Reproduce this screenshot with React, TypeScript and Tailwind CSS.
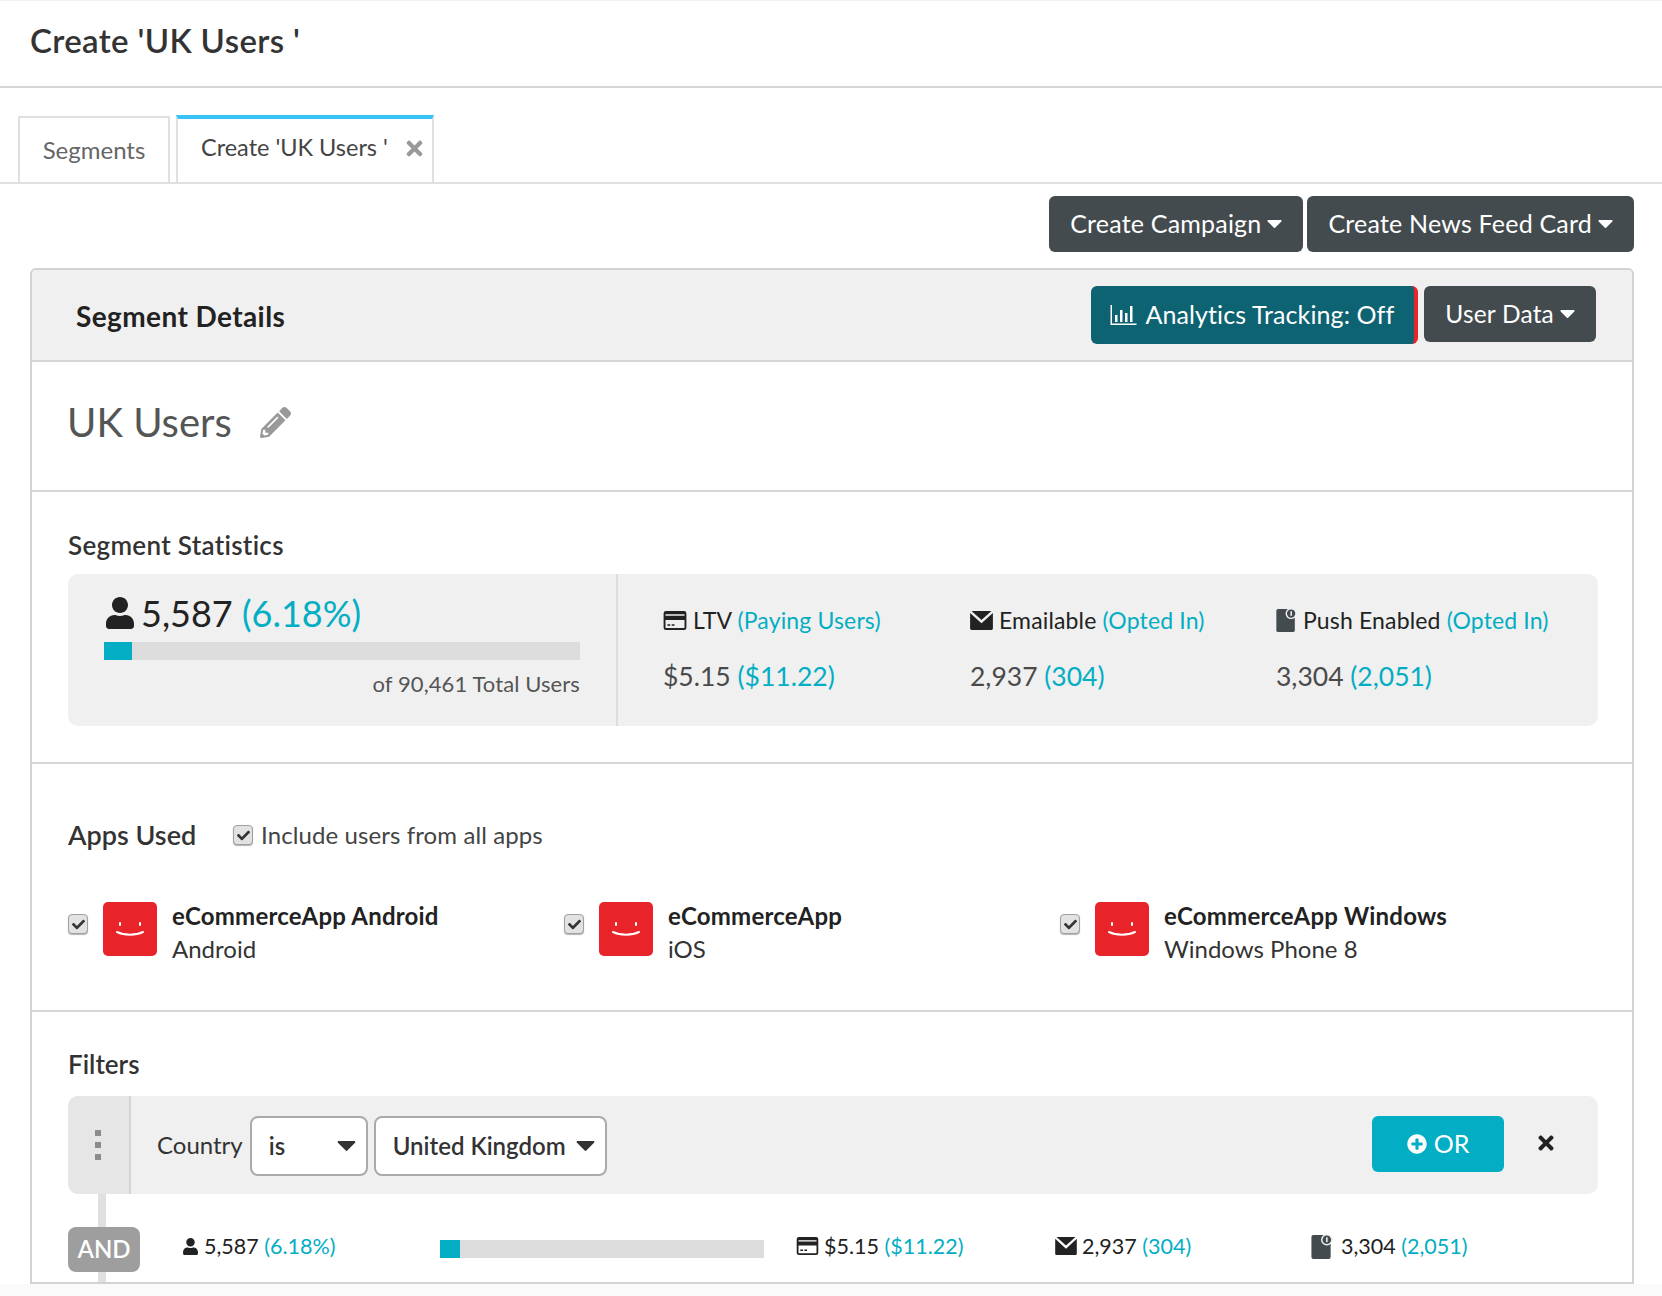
import { FaCheck, FaPencilAlt, FaPlusCircle, FaTimes, FaUser } from "react-icons/fa";

const APPS = [
  { name: "eCommerceApp Android", platform: "Android" },
  { name: "eCommerceApp", platform: "iOS" },
  { name: "eCommerceApp Windows", platform: "Windows Phone 8" },
];

function Caret({ className }: { className?: string }) {
  return (
    <svg viewBox="0 0 16 9" className={className} fill="currentColor">
      <path d="M1 0h14c.9 0 1.300 1 .7 1.600L8.700 8.600a1 1 0 0 1-1.400 0L.3 1.600C-.3 1 .1 0 1 0z" />
    </svg>
  );
}

function CardIcon({ className }: { className?: string }) {
  return (
    <svg viewBox="0 0 24 20" className={className} fill="currentColor">
      <path d="M2.500 0h19A2.500 2.500 0 0 1 24 2.500v15a2.500 2.500 0 0 1-2.500 2.500h-19A2.500 2.500 0 0 1 0 17.500v-15A2.500 2.500 0 0 1 2.500 0zM2 3.500V5h20V3.500zM2 9.500v8c0 .3.200.5.500.5h19c.3 0 .5-.2.500-.5v-8zm2 4.500h3v1.500H4zm4.500 0h3v1.500h-3z" fillRule="evenodd" />
    </svg>
  );
}

function MailIcon({ className }: { className?: string }) {
  return (
    <svg viewBox="0 0 24 20" className={className} fill="currentColor">
      <path d="M1.500 0h21L12 9.500zM0 2v16.500C0 19.300.7 20 1.500 20h21c.8 0 1.500-.7 1.500-1.500V2L12 13z" />
    </svg>
  );
}

function PushIcon({ className }: { className?: string }) {
  return (
    <svg viewBox="0 0 22 26" className={className}>
      <path d="M2 1h16a2 2 0 0 1 2 2v21a2 2 0 0 1-2 2H2a2 2 0 0 1-2-2V3a2 2 0 0 1 2-2z" fill="#444b4e" />
      <circle cx="16" cy="6" r="6" fill="#f0f0f0" />
      <circle cx="16" cy="6" r="4.500" fill="#444b4e" />
      <rect x="15.300" y="3.500" width="1.500" height="5" fill="#fff" />
    </svg>
  );
}

function ChartIcon({ className }: { className?: string }) {
  return (
    <svg viewBox="0 0 26 20" className={className} fill="currentColor">
      <path d="M0 0h1.500v18.500H26V20H0zM4.500 10h2.500v7H4.500zm5-5h2.500v12H9.500zm5 3h2.500v9H14.500zm5-7h2.500v16H19.500z" />
    </svg>
  );
}

function Smile({ className }: { className?: string }) {
  return (
    <div className={`flex items-center justify-center rounded-[5px] bg-[#e8242a] ${className}`}>
      <svg viewBox="0 0 30 16" className="h-[16px] w-[30px]" fill="none" stroke="#fff" strokeWidth="2" strokeLinecap="round">
        <path d="M5 2v2M25 2v2" />
        <path d="M2 11c7 3.500 19 3.500 26 0" />
      </svg>
    </div>
  );
}

function Check({ className }: { className?: string }) {
  return (
    <span className={`flex h-[20px] w-[20px] shrink-0 items-center justify-center rounded-[4px] border border-[#a0a0a0] bg-[#e2e2e2] shadow-[0_1px_1px_rgba(0,0,0,0.3)] ${className ?? ""}`}>
      <FaCheck className="text-[13px] text-[#333]" />
    </span>
  );
}

function DarkButton({ label, size }: { label: string; size: string }) {
  return (
    <button className={`flex h-[56px] items-center gap-[6px] rounded-[6px] bg-[#444b4e] px-[21px] tracking-[0.2px] text-white ${size}`}>
      {label}
      <Caret className="h-[8px] w-[15px]" />
    </button>
  );
}

function Stat({ icon, label, note, value, paren }: { icon: React.ReactNode; label: string; note: string; value: string; paren: string }) {
  return (
    <div>
      <div className="flex items-center gap-[6px] text-[23px] tracking-[0.15px] text-[#222]">
        {icon}
        <span>
          {label} <span className="text-[#03aec4]">{note}</span>
        </span>
      </div>
      <div className="mt-[19px] text-[26.500px] text-[#4a4a4a]">
        {value} <span className="text-[#03aec4]">{paren}</span>
      </div>
    </div>
  );
}

function MiniStat({ icon, value, paren, className }: { icon: React.ReactNode; value: string; paren: string; className?: string }) {
  return (
    <div className={`mt-[2px] flex items-center gap-[5px] text-[21.500px] text-[#222] ${className}`}>
      {icon}
      <span>
        {value} <span className="text-[#03aec4]">{paren}</span>
      </span>
    </div>
  );
}

export default function App() {
  return (
    <div className="h-[1296px] w-[1662px] overflow-hidden bg-white font-['Lato','Open_Sans',sans-serif] text-[#333]">
      <header className="flex h-[88px] items-center border-t border-b-2 border-t-[#f2f2f2] border-b-[#d6d6d6] pb-[6px] pl-[30px]">
        <h1 className="text-[33px] font-semibold tracking-[0.35px] text-[#333]">Create 'UK Users '</h1>
      </header>

      <div className="flex h-[96px] items-end gap-[6px] border-b-2 border-[#e0e0e0] pl-[18px]">
        <div className="flex h-[66px] w-[152px] items-center justify-center border-2 border-b-0 border-[#e0e0e0] text-[24px] text-[#666]">
          Segments
        </div>
        <div className="flex h-[67px] w-[258px] items-center gap-[15px] border-x-2 border-t-4 border-x-[#e0e0e0] border-t-[#38c3f5] pb-[5px] pl-[23px] text-[23.500px] text-[#444]">
          Create 'UK Users '
          <FaTimes className="text-[23px] text-[#999]" />
        </div>
      </div>

      <div className="flex justify-end gap-[4px] pr-[28px] pt-[12px]">
        <DarkButton label="Create Campaign" size="text-[25px]" />
        <DarkButton label="Create News Feed Card" size="text-[25px]" />
      </div>

      <div className="ml-[30px] mt-[16px] h-[1016px] w-[1604px] overflow-hidden rounded-t-[6px] border-2 border-[#d2d2d2]">
        <div className="flex h-[92px] items-center justify-between border-b-2 border-[#d6d6d6] bg-[#f0f0f0] pl-[44px] pr-[36px]">
          <h2 className="pt-[2px] text-[28px] font-bold tracking-[0.4px] text-[#222]">Segment Details</h2>
          <div className="flex items-start gap-[6px]">
            <button className="flex h-[58px] items-center gap-[9px] rounded-[6px] border-r-[4px] border-[#e8242a] bg-[#0e6373] pl-[19px] pr-[20px] text-[25px] tracking-[0.1px] text-white">
              <ChartIcon className="h-[20px] w-[27px]" />
              Analytics Tracking: Off
            </button>
            <DarkButton label="User Data" size="text-[24.500px]" />
          </div>
        </div>

        <div className="flex h-[130px] items-center gap-[28px] border-b-2 border-[#d6d6d6] pb-[8px] pl-[35px]">
          <span className="text-[40px] text-[#555]">UK Users</span>
          <FaPencilAlt className="text-[31px] text-[#999]" />
        </div>

        <div className="h-[272px] border-b-2 border-[#d6d6d6] pl-[36px] pr-[34px] pt-[38px]">
          <h3 className="text-[26px] font-semibold leading-[30px] tracking-[0.3px] text-[#333]">Segment Statistics</h3>
          <div className="mt-[14px] flex h-[152px] rounded-[10px] bg-[#f0f0f0]">
            <div className="w-[550px] border-r-2 border-[#dcdcdc] pl-[36px] pr-[36px] pt-[16px]">
              <div className="flex items-center gap-[5px] text-[36px] leading-[46px] text-[#222]">
                <FaUser className="text-[32px]" />
                <span>
                  5,587 <span className="text-[#03aec4]">(6.18%)</span>
                </span>
              </div>
              <div className="mt-[6px] h-[18px] w-[476px] bg-[#dcdcdc]">
                <div className="h-full w-[28px] bg-[#03aec4]" />
              </div>
              <p className="mt-[7px] text-right text-[22px] tracking-[0.1px] text-[#555]">of 90,461 Total Users</p>
            </div>
            <div className="grid flex-1 grid-cols-[307px_306px_1fr] pl-[45px] pt-[29px]">
              <Stat icon={<CardIcon className="h-[19px] w-[24px]" />} label="LTV" note="(Paying Users)" value="$5.15" paren="($11.22)" />
              <Stat icon={<MailIcon className="h-[19px] w-[23px]" />} label="Emailable" note="(Opted In)" value="2,937" paren="(304)" />
              <Stat icon={<PushIcon className="h-[24px] w-[21px]" />} label="Push Enabled" note="(Opted In)" value="3,304" paren="(2,051)" />
            </div>
          </div>
        </div>

        <div className="h-[248px] border-b-2 border-[#d6d6d6] pl-[36px] pr-[34px] pt-[53px]">
          <div className="flex items-center">
            <h3 className="w-[165px] text-[27px] font-semibold leading-[32px] text-[#333]">Apps Used</h3>
            <Check />
            <span className="ml-[8px] text-[24px] tracking-[0.1px] text-[#444]">Include users from all apps</span>
          </div>
          <div className="mt-[42px] grid grid-cols-[496px_496px_1fr]">
            {APPS.map((app) => (
              <div key={app.platform} className="flex items-center">
                <Check className="mb-[12px]" />
                <Smile className="mb-[2px] ml-[15px] h-[54px] w-[54px]" />
                <div className="ml-[15px] mt-[4px]">
                  <div className="text-[24px] font-bold leading-[33px] tracking-[0.2px] text-[#222]">{app.name}</div>
                  <div className="text-[24px] leading-[33px] text-[#333]">{app.platform}</div>
                </div>
              </div>
            ))}
          </div>
        </div>

        <div className="relative pl-[36px] pr-[34px] pt-[37px]">
          <h3 className="text-[26px] font-semibold leading-[30px] text-[#333]">Filters</h3>
          <div className="absolute left-[66px] top-[150px] h-[200px] w-[8px] bg-[#e0e0e0]" />
          <div className="relative mt-[17px] flex h-[98px] items-center overflow-hidden rounded-[10px] bg-[#f0f0f0]">
            <div className="flex h-full w-[63px] flex-col items-center justify-center gap-[6px] border-r-2 border-[#d4d4d4] bg-[#e6e6e6] pr-[2px]">
              <span className="h-[6px] w-[6px] bg-[#8c8c8c]" />
              <span className="h-[6px] w-[6px] bg-[#8c8c8c]" />
              <span className="h-[6px] w-[6px] bg-[#8c8c8c]" />
            </div>
            <span className="ml-[26px] mr-[7px] text-[24px] text-[#333]">Country</span>
            <div className="mt-[2px] flex h-[60px] w-[118px] items-center justify-between rounded-[8px] border-2 border-[#aaa] bg-white pl-[17px] pr-[10px] text-[24px] font-semibold text-[#333]">
              is
              <Caret className="h-[10px] w-[19px]" />
            </div>
            <div className="ml-[6px] mt-[2px] flex h-[60px] w-[233px] items-center justify-between whitespace-nowrap rounded-[8px] border-2 border-[#aaa] bg-white pl-[17px] pr-[10px] text-[24px] font-semibold text-[#333]">
              United Kingdom
              <Caret className="h-[10px] w-[19px]" />
            </div>
            <button className="mb-[2px] ml-auto flex h-[56px] w-[132px] items-center justify-center gap-[7px] rounded-[6px] bg-[#03aec4] text-[25px] text-white">
              <FaPlusCircle className="text-[20px]" />
              OR
            </button>
            <FaTimes className="mb-[4px] ml-[31px] mr-[41px] text-[22px] text-[#222]" />
          </div>

          <div className="relative mt-[25px] flex h-[52px] items-center">
            <span className="mt-[8px] flex h-[45px] w-[72px] items-center justify-center rounded-[8px] bg-[#9e9e9e] text-[24px] font-semibold text-white">AND</span>
            <MiniStat className="ml-[42px] w-[258px]" icon={<FaUser className="text-[17px]" />} value="5,587" paren="(6.18%)" />
            <div className="mt-[7px] h-[18px] w-[324px] bg-[#dcdcdc]">
              <div className="h-full w-[20px] bg-[#03aec4]" />
            </div>
            <MiniStat className="ml-[32px] w-[259px]" icon={<CardIcon className="h-[18px] w-[23px]" />} value="$5.15" paren="($11.22)" />
            <MiniStat className="w-[256px]" icon={<MailIcon className="h-[18px] w-[22px]" />} value="2,937" paren="(304)" />
            <MiniStat className="gap-[8px]" icon={<PushIcon className="h-[25px] w-[22px]" />} value="3,304" paren="(2,051)" />
          </div>
        </div>
      </div>
      <div className="h-[14px] bg-[#fafafa]" />
    </div>
  );
}
